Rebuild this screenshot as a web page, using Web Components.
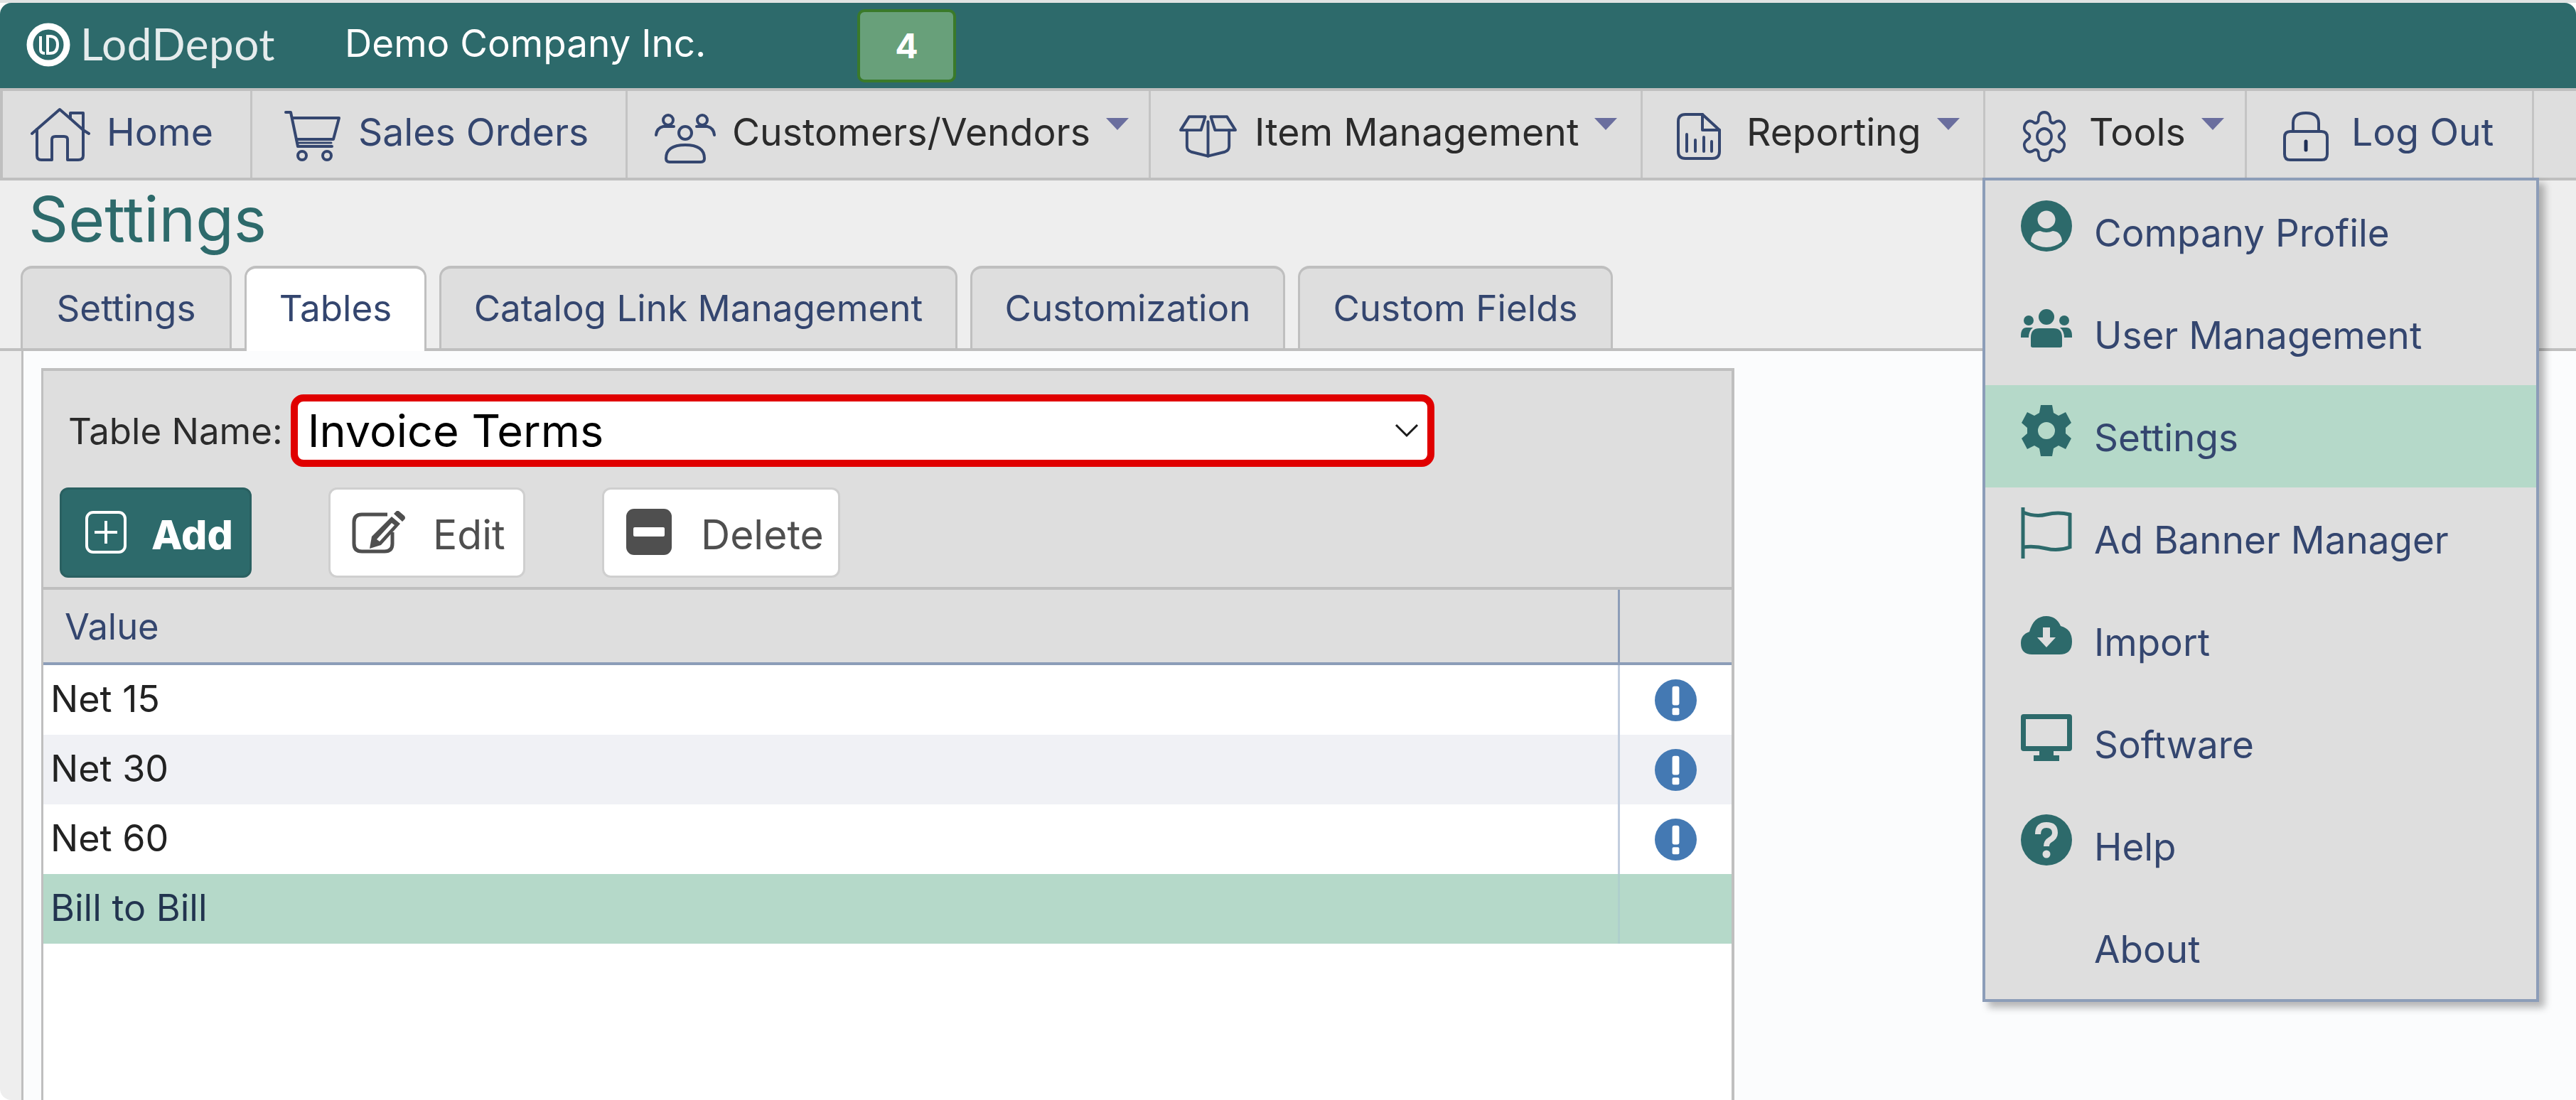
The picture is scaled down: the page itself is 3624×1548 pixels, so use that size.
<!DOCTYPE html>
<html>
<head>
<meta charset="utf-8">
<title>Settings</title>
<style>
  html, body { margin: 0; height: 100%; background: #fbfcfd; overflow: hidden; }
  body { font-family: Inter, "Liberation Sans", sans-serif; }
</style>
</head>
<body>
<app-shell></app-shell>
<script>
const TEAL = '#2d6a6b';
const INK = '#34466f';

// six lobed outline for the Tools icon
function gearPath() {
  const p = (r, deg) => {
    const a = deg * Math.PI / 180;
    return (36 + r * Math.cos(a)).toFixed(1) + ' ' + (36 + r * Math.sin(a)).toFixed(1);
  };
  let d = 'M' + p(24, -112);
  for (let i = 0; i < 6; i++) {
    const a = -90 + i * 60;
    d += `Q${p(35, a - 16)} ${p(34, a)}Q${p(35, a + 16)} ${p(24, a + 22)}Q${p(21, a + 30)} ${p(24, a + 38)}`;
  }
  return d + 'Z';
}

const LINE = 'fill="none" stroke="#34466f" stroke-width="4" stroke-linecap="round" stroke-linejoin="round"';
const ICONS = {
  home: `<svg viewBox="0 0 84 76" ${LINE}><path d="M2 37 41 3 56 16V8H74V32L82 37"/><path d="M56 16 74 32"/><path d="M9 31V68Q9 74 15 74H30V45Q30 41 35 41H47Q52 41 52 45V74H67Q74 74 74 68V32"/></svg>`,
  cart: `<svg viewBox="0 0 80 72" ${LINE}><path d="M2 2H9L19 50H67"/><path d="M11 10H77L69 40H17"/><path d="M19 45H66" stroke-width="3"/><circle cx="25" cy="63" r="6"/><circle cx="60" cy="63" r="6"/></svg>`,
  people: `<svg viewBox="0 0 86 70" ${LINE}><circle cx="19" cy="9" r="7"/><circle cx="67" cy="9" r="7"/><circle cx="43" cy="27" r="9"/><path d="M2 30Q3 20 12 18H27"/><path d="M84 30Q83 20 74 18H59"/><path d="M16 63Q16 44 43 44 70 44 70 63 70 68 65 68H21Q16 68 16 63Z"/></svg>`,
  box: `<svg viewBox="0 0 84 60" ${LINE}><path d="M15 2H38L32 21H3Z"/><path d="M69 2H46L52 21H81Z"/><path d="M12 21V44Q12 50 18 52L42 58 66 52Q72 50 72 44V21"/><path d="M42 9V58"/></svg>`,
  report: `<svg viewBox="0 0 62 66" ${LINE}><path d="M36 2H12Q2 2 2 12V54Q2 64 12 64H50Q60 64 60 54V24Z"/><path d="M36 2V24H60"/><path d="M14 54V30M26 54V38M38 54V34M49 54V40"/></svg>`,
  gear: `<svg viewBox="0 0 72 72" preserveAspectRatio="none" ${LINE}><path d="${gearPath()}"/><circle cx="36" cy="36" r="11"/></svg>`,
  lock: `<svg viewBox="0 0 64 70" ${LINE}><path d="M14 28V16Q14 2 32 2 50 2 50 16V28"/><path d="M10 28H54Q62 28 62 36V60Q62 68 54 68H10Q2 68 2 60V36Q2 28 10 28Z"/><path d="M32 42V54" stroke-width="5" stroke="#1f2f55"/></svg>`,
  profile: '<svg viewBox="0 0 72 72"><circle cx="36" cy="36" r="36" fill="#2d6a6b"/><circle cx="36" cy="27" r="12.5" fill="#dedede"/><path d="M14 58Q15 44 27 43 36 47 45 43 57 44 58 58 48 66 36 66 24 66 14 58Z" fill="#dedede"/></svg>',
  users: '<svg viewBox="0 0 72 54" fill="#2d6a6b"><circle cx="36" cy="11" r="11"/><circle cx="11" cy="16" r="7"/><circle cx="61" cy="16" r="7"/><path d="M14 52V40Q14 27 26 27H46Q58 27 58 40V52Q58 54 54 54H18Q14 54 14 52Z"/><path d="M0 38Q0 26 8 26H17Q11 31 11 40H0Z"/><path d="M72 38Q72 26 64 26H55Q61 31 61 40H72Z"/></svg>',
  cog: '<svg viewBox="0 0 72 72"><path fill="#2d6a6b" fill-rule="evenodd" d="M28 0H44L46 11 53 15 63 10 71 25 63 32V40L71 47 63 62 53 57 46 61 44 72H28L26 61 19 57 9 62 1 47 9 40V32L1 25 9 10 19 15 26 11ZM36 24A12 12 0 1 0 36 48 12 12 0 1 0 36 24Z"/></svg>',
  flag: '<svg viewBox="0 0 72 72" fill="none" stroke="#2d6a6b" stroke-width="5"><path d="M3 0V72"/><path d="M3 7Q20 14 36 10T69 10V56Q52 62 36 58T3 56"/></svg>',
  cloud: '<svg viewBox="0 0 72 54"><path fill="#2d6a6b" d="M36 0Q50 0 56 14 72 18 72 36 72 54 54 54H16Q0 54 0 38 0 26 12 22 18 0 36 0Z"/><path fill="#dedede" d="M31 16H41V30H49L36 44 23 30H31Z"/></svg>',
  monitor: '<svg viewBox="0 0 72 66"><path fill="#2d6a6b" fill-rule="evenodd" d="M4 0H68Q72 0 72 4V48Q72 52 68 52H46V58H54V66H18V58H26V52H4Q0 52 0 48V4Q0 0 4 0ZM7 7V45H65V7Z"/></svg>',
  help: '<svg viewBox="0 0 72 72"><circle cx="36" cy="36" r="36" fill="#2d6a6b"/><path fill="none" stroke="#dedede" stroke-width="8" d="M24 28Q24 15 36 15 48 15 48 26 48 32 41 36 36 39 36 45"/><circle cx="36" cy="56" r="5.5" fill="#dedede"/></svg>',
  plus: '<svg viewBox="0 0 58 60" fill="none" stroke="#fff" stroke-width="4"><rect x="2" y="2" width="54" height="56" rx="9"/><path d="M29 14V46M13 30H45"/></svg>',
  edit: '<svg viewBox="0 0 76 60"><path fill="none" stroke="#4f4f4f" stroke-width="5" d="M50 5H14Q3 5 3 16V46Q3 57 14 57H46Q57 57 57 46V30"/><path fill="#4f4f4f" d="M56 8 68 18 41 48 25 53 28 36Z"/><path fill="#fff" d="M56 17 60 20 39 43 35 40Z"/><path fill="#4f4f4f" d="M59 4 63 0Q65-1 67 1L74 7Q76 10 74 12L71 15Z"/></svg>',
  minus: '<svg viewBox="0 0 64 65"><rect width="64" height="65" rx="11" fill="#4f4f4f"/><rect x="10" y="26" width="44" height="13" rx="2" fill="#fff"/></svg>',
  alert: '<svg viewBox="0 0 60 60"><circle cx="30" cy="30" r="30" fill="#4479b3"/><rect x="25" y="10" width="10" height="27" rx="3" fill="#fff"/><rect x="25" y="41" width="10" height="10" rx="2" fill="#fff"/></svg>'
};

class LdIcon extends HTMLElement {
  connectedCallback() {
    const root = this.shadowRoot || this.attachShadow({ mode: 'open' });
    root.innerHTML = `
      <style>
        :host { display: inline-flex; align-items: center; justify-content: center; flex: none; }
        svg { display: block; width: 100%; height: 100%; }
      </style>
      ${ICONS[this.getAttribute('name')] || ''}`;
  }
}
customElements.define('ld-icon', LdIcon);

class TopBar extends HTMLElement {
  constructor() {
    super();
    this.attachShadow({ mode: 'open' }).innerHTML = `
      <style>
        :host { display: flex; align-items: center; flex: none; height: 120px; background: ${TEAL}; border-radius: 16px 16px 0 0; color: #fff; }
        .logo { display: flex; align-items: center; width: 485px; padding-left: 37px; box-sizing: border-box; }
        .mark { width: 62px; height: 64px; flex: none; margin-top: -2px; }
        .word { font: 400 62px Lato, sans-serif; letter-spacing: .5px; margin-left: 14px; opacity: .88; position: relative; top: -3px; }
        .name { font-size: 53px; width: 725px; position: relative; top: -3px; }
        .badge { width: 139px; height: 103px; box-sizing: border-box; border: 4px solid #3a7a2a; border-radius: 10px; background: #68a07a; margin-left: -4px;
          display: flex; align-items: center; justify-content: center; font-weight: 700; font-size: 48px; }
      </style>
      <div class="logo">
        <svg class="mark" viewBox="0 0 62 62" fill="none" stroke="#fff"><circle cx="31" cy="31" r="26" stroke-width="9"/><path d="M20 19V38Q20 43 26 43" stroke-width="4"/><path d="M30 19H33Q44 19 44 31 44 43 33 43H30Z" stroke-width="4"/></svg>
        <span class="word">LodDepot</span>
      </div>
      <div class="name"><slot></slot></div>
      <div class="badge">4</div>`;
  }
}
customElements.define('top-bar', TopBar);

class NavItem extends HTMLElement {
  constructor() {
    super();
    const icon = this.getAttribute('icon');
    const iw = this.getAttribute('iw');
    const ih = this.getAttribute('ih') || 70;
    const caret = this.hasAttribute('caret');
    const dark = this.hasAttribute('dark');
    this.attachShadow({ mode: 'open' }).innerHTML = `
      <style>
        :host { display: flex; align-items: center; box-sizing: border-box; width: ${this.getAttribute('w')}px; flex: none; height: 100%;
          border-right: 3px solid #c4c4c4; padding-left: ${this.getAttribute('pl')}px; }
        ld-icon { width: ${iw}px; height: ${ih}px; margin-top: ${this.getAttribute('mt') || 6}px; }
        span { font-size: 53.5px; color: ${dark ? '#2b2b2b' : INK}; margin-left: ${this.getAttribute('gap')}px; white-space: nowrap; position: relative; top: -4px; }
        i { width: 0; height: 0; border: 16px solid transparent; border-top: 17px solid #6a6e9e; border-bottom: 0; margin-left: 22px; position: relative; top: -15px; }
      </style>
      <ld-icon name="${icon}"></ld-icon><span><slot></slot></span>${caret ? '<i></i>' : ''}`;
  }
}
customElements.define('nav-item', NavItem);

class NavBar extends HTMLElement {
  constructor() {
    super();
    this.attachShadow({ mode: 'open' }).innerHTML = `
      <style>
        :host { display: flex; flex: none; height: 122px; background: #dedede; border: 4px solid #bfbfbf; border-right: 0; }
      </style>
      <slot></slot>`;
  }
}
customElements.define('nav-bar', NavBar);

class TabStrip extends HTMLElement {
  constructor() {
    super();
    this.attachShadow({ mode: 'open' }).innerHTML = `
      <style>
        :host { display: flex; flex: none; gap: 18px; padding-left: 29px; height: 120px; box-sizing: border-box; border-bottom: 4px solid #bfbfbf; align-items: flex-end; }
      </style>
      <slot></slot>`;
  }
}
customElements.define('tab-strip', TabStrip);

class TabItem extends HTMLElement {
  constructor() {
    super();
    const active = this.hasAttribute('active');
    this.attachShadow({ mode: 'open' }).innerHTML = `
      <style>
        :host { display: flex; align-items: center; justify-content: center; box-sizing: border-box; width: ${this.getAttribute('w')}px;
          height: ${active ? 120 : 116}px; margin-bottom: ${active ? -4 : 0}px; padding-bottom: ${active ? 6 : 2}px;
          border: 3px solid #bfbfbf; border-top-width: 4px; border-bottom: 0; border-radius: 16px 16px 0 0;
          background: ${active ? '#fff' : '#dedede'}; color: ${INK}; font-size: 51.2px; }
      </style>
      <slot></slot>`;
  }
}
customElements.define('tab-item', TabItem);

class ToolButton extends HTMLElement {
  constructor() {
    super();
    const primary = this.hasAttribute('primary');
    this.attachShadow({ mode: 'open' }).innerHTML = `
      <style>
        :host { display: inline-flex; align-items: center; box-sizing: border-box; width: ${this.getAttribute('w')}px; height: 127px;
          padding-left: ${this.getAttribute('pl')}px; border-radius: 12px; border: 3px solid ${primary ? '#2a6061' : '#cfcfcf'};
          background: ${primary ? TEAL : '#fff'}; color: ${primary ? '#fff' : '#4f4f4f'}; font-size: 57px; font-weight: ${primary ? 800 : 400}; }
        ld-icon { width: ${this.getAttribute('iw')}px; height: ${this.getAttribute('ih') || 60}px; margin-right: ${this.getAttribute('gap')}px; position: relative; top: -1px; }
        span { position: relative; top: 3px; }
      </style>
      <ld-icon name="${this.getAttribute('icon')}"></ld-icon><span><slot></slot></span>`;
  }
}
customElements.define('tool-button', ToolButton);

class DataRow extends HTMLElement {
  constructor() {
    super();
    const alt = this.hasAttribute('alt');
    const sel = this.hasAttribute('selected');
    const flagged = this.hasAttribute('flag');
    const bg = sel ? '#b5d9c9' : alt ? '#f0f1f5' : '#fff';
    this.attachShadow({ mode: 'open' }).innerHTML = `
      <style>
        :host { display: grid; grid-template-columns: 1fr 157px; height: 98px; background: ${bg}; color: ${sel ? '#22344f' : '#222'}; font-size: 52px; }
        .v { padding: 0 0 4px 10px; display: flex; align-items: center; border-right: 3px solid ${sel ? '#aecfcc' : '#c2cdde'}; }
        .f { display: flex; align-items: center; justify-content: center; }
        ld-icon { width: 59px; height: 59px; }
      </style>
      <div class="v"><slot></slot></div>
      <div class="f">${flagged ? '<ld-icon name="alert"></ld-icon>' : ''}</div>`;
  }
}
customElements.define('data-row', DataRow);

class TablePanel extends HTMLElement {
  constructor() {
    super();
    this.attachShadow({ mode: 'open' }).innerHTML = `
      <style>
        :host { display: block; margin: 24px 0 0 25px; width: 2382px; height: 1100px; box-sizing: border-box; background: #fff;
          border: 3px solid #bfbfbf; border-top-width: 4px; border-right-width: 4px; }
        .tools { background: #dedede; height: 308px; box-sizing: border-box; padding: 33px 0 0 23px; border-bottom: 4px solid #bfbfbf; }
        .pick { display: flex; align-items: center; margin-left: 12px; height: 102px; color: #2b2b2b; font-size: 51px; }
        .select { display: flex; align-items: center; justify-content: space-between; box-sizing: border-box; width: 1609px; height: 102px; margin-left: 11px;
          border: 10px solid #e00000; border-radius: 18px; background: #fff; padding: 0 12px 0 14px; color: #000; font-size: 63px; }
        .select svg { width: 34px; height: 20px; }
        .btns { display: flex; margin-top: 29px; }
        .head { display: grid; grid-template-columns: 1fr 157px; height: 106px; box-sizing: border-box; background: #dedede; border-bottom: 4px solid #8c9db8; color: ${INK}; font-size: 50.7px; }
        .head div { display: flex; align-items: center; padding: 0 0 0 30px; border-right: 3px solid #8c9db8; }
        .head div + div { border: 0; padding: 0; }
        .btns ::slotted(tool-button) { margin-right: 108px; }
      </style>
      <div class="tools">
        <div class="pick">Table Name:
          <div class="select"><span>Invoice Terms</span>
            <svg viewBox="0 0 34 20" fill="none" stroke="#1a1a1a" stroke-width="3"><path d="M2 2 17 17 32 2"/></svg>
          </div>
        </div>
        <div class="btns"><slot name="buttons"></slot></div>
      </div>
      <div class="head"><div>Value</div><div></div></div>
      <slot></slot>`;
  }
}
customElements.define('table-panel', TablePanel);

class MenuRow extends HTMLElement {
  constructor() {
    super();
    const icon = this.getAttribute('icon');
    this.attachShadow({ mode: 'open' }).innerHTML = `
      <style>
        :host { display: flex; align-items: center; height: 144px; padding-left: 50px; background: ${this.hasAttribute('active') ? '#b5d9c9' : 'transparent'}; color: ${INK}; font-size: 53px; }
        .ic { width: 72px; height: 72px; position: relative; top: -8px; flex: none; display: flex; align-items: center; margin-right: 31px; }
        ld-icon { width: 72px; height: ${this.getAttribute('ih') || 72}px; }
        span { position: relative; top: 2px; }
      </style>
      <div class="ic">${icon ? `<ld-icon name="${icon}"></ld-icon>` : ''}</div><span><slot></slot></span>`;
  }
}
customElements.define('menu-row', MenuRow);

class DropMenu extends HTMLElement {
  constructor() {
    super();
    this.attachShadow({ mode: 'open' }).innerHTML = `
      <style>
        :host { position: absolute; left: 2789px; top: 250px; width: 783px; height: 1160px; box-sizing: border-box;
          background: #dedede; border: 4px solid #8c9db8; box-shadow: 8px 8px 10px rgba(0,0,0,.28); }
      </style>
      <slot></slot>`;
  }
}
customElements.define('drop-menu', DropMenu);

class AppShell extends HTMLElement {
  constructor() {
    super();
    this.attachShadow({ mode: 'open' }).innerHTML = `
      <style>
        :host { display: flex; flex-direction: column; position: relative; width: 3624px; height: 1548px; box-sizing: border-box; padding-top: 4px;
          background: linear-gradient(#e1e3e3 4px, #fff 4px); overflow: hidden; font-family: Inter, "Liberation Sans", sans-serif; }
        main { flex: 1; min-height: 0; background: #eeeeee; display: flex; flex-direction: column; border-radius: 0 0 0 16px; overflow: hidden; }
        h1 { margin: 0; flex: none; height: 120px; box-sizing: border-box; padding: 0 0 0 40px; color: ${TEAL}; font-size: 87.5px; font-weight: 400; line-height: 109px; }
        .body { flex: 1; min-height: 0; margin-left: 30px; border-left: 3px solid #bfbfbf; background: #fbfcfd; overflow: hidden; }
      </style>
      <top-bar>Demo Company Inc.</top-bar>
      <nav-bar>
        <nav-item icon="home" w="351" iw="84" ih="76" mt="0" pl="39" gap="23">Home</nav-item>
        <nav-item icon="cart" w="528" iw="80" ih="72" pl="45" gap="24">Sales Orders</nav-item>
        <nav-item icon="people" w="736" iw="86" pl="38" gap="23" mt="12" caret dark>Customers/Vendors</nav-item>
        <nav-item icon="box" w="692" iw="83" ih="60" pl="39" gap="24" caret dark>Item Management</nav-item>
        <nav-item icon="report" w="482" iw="62" ih="66" pl="48" gap="36" caret dark>Reporting</nav-item>
        <nav-item icon="gear" w="368" iw="66" ih="72" pl="50" gap="30" caret dark>Tools</nav-item>
        <nav-item icon="lock" w="404" iw="64" pl="51" gap="32">Log Out</nav-item>
      </nav-bar>
      <main>
        <h1>Settings</h1>
        <tab-strip>
          <tab-item w="297">Settings</tab-item>
          <tab-item w="256" active>Tables</tab-item>
          <tab-item w="729">Catalog Link Management</tab-item>
          <tab-item w="443">Customization</tab-item>
          <tab-item w="443">Custom Fields</tab-item>
        </tab-strip>
        <div class="body">
          <table-panel>
            <tool-button slot="buttons" primary icon="plus" w="270" pl="33" iw="58" gap="35">Add</tool-button>
            <tool-button slot="buttons" icon="edit" w="277" pl="30" iw="76" gap="38">Edit</tool-button>
            <tool-button slot="buttons" icon="minus" w="335" pl="31" iw="64" ih="65" gap="41">Delete</tool-button>
            <data-row flag>Net 15</data-row>
            <data-row flag alt>Net 30</data-row>
            <data-row flag>Net 60</data-row>
            <data-row selected>Bill to Bill</data-row>
          </table-panel>
        </div>
      </main>
      <drop-menu>
        <menu-row icon="profile">Company Profile</menu-row>
        <menu-row icon="users" ih="54">User Management</menu-row>
        <menu-row icon="cog" active>Settings</menu-row>
        <menu-row icon="flag">Ad Banner Manager</menu-row>
        <menu-row icon="cloud" ih="54">Import</menu-row>
        <menu-row icon="monitor" ih="66">Software</menu-row>
        <menu-row icon="help">Help</menu-row>
        <menu-row>About</menu-row>
      </drop-menu>`;
  }
}
customElements.define('app-shell', AppShell);
</script>
</body>
</html>
